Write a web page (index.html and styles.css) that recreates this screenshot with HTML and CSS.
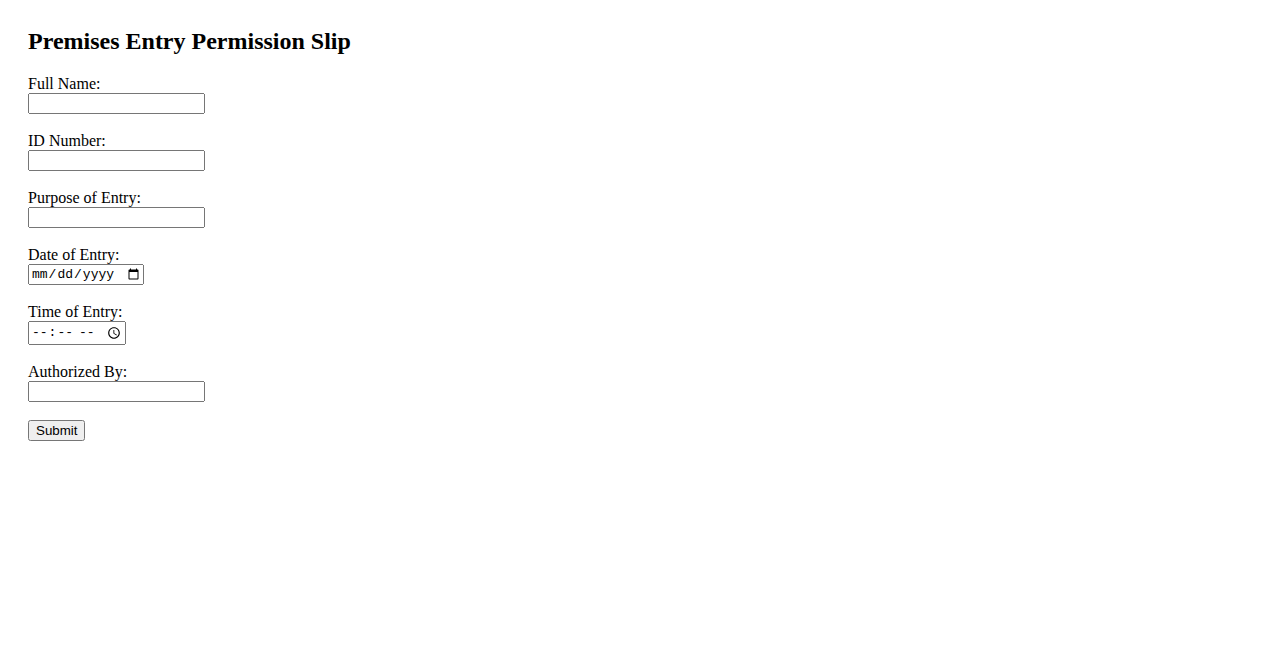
FILE: index.html
```html
<!DOCTYPE html>
<html lang="en">
<head>
    <meta charset="UTF-8">
    <meta name="viewport" content="width=device-width, initial-scale=1.0">
    <title>Premises Entry Permission Slip</title>
    <link rel="stylesheet" href="styles.css">
</head>
<body>

<h2>Premises Entry Permission Slip</h2>

<form class="slip" onsubmit="return false;">
    <div class="field">
        <label for="fullName">Full Name:</label>
        <input type="text" id="fullName" name="fullName">
    </div>
    <div class="field">
        <label for="idNumber">ID Number:</label>
        <input type="text" id="idNumber" name="idNumber">
    </div>
    <div class="field">
        <label for="purpose">Purpose of Entry:</label>
        <input type="text" id="purpose" name="purpose">
    </div>
    <div class="field">
        <label for="entryDate">Date of Entry:</label>
        <input type="date" id="entryDate" name="entryDate">
    </div>
    <div class="field">
        <label for="entryTime">Time of Entry:</label>
        <input type="time" id="entryTime" name="entryTime">
    </div>
    <div class="field">
        <label for="authorizedBy">Authorized By:</label>
        <input type="text" id="authorizedBy" name="authorizedBy">
    </div>
    <button type="submit">Submit</button>
</form>

</body>
</html>
```

FILE: styles.css
```css
body {
    margin: 0;
    padding: 28px;
    font-family: 'Liberation Serif', 'Times New Roman', serif;
    font-size: 16px;
    color: #000;
    background-color: #fff;
}

h2 {
    margin: 0 0 20px;
    font-size: 24px;
}

.field {
    margin-bottom: 18px;
}

.field label {
    display: block;
}

.field input {
    display: block;
    box-sizing: border-box;
}

.field input[type="text"] {
    width: 177px;
}

.field input[type="date"],
.field input[type="time"] {
    font-family: 'Liberation Mono', 'Courier New', monospace;
    font-size: 13px;
}

.field input[type="date"] {
    width: 116px;
}

.field input[type="time"] {
    width: 98px;
    height: 24px;
}

button {
    font-family: 'Liberation Sans', Arial, sans-serif;
    font-size: 13.33px;
}
```
